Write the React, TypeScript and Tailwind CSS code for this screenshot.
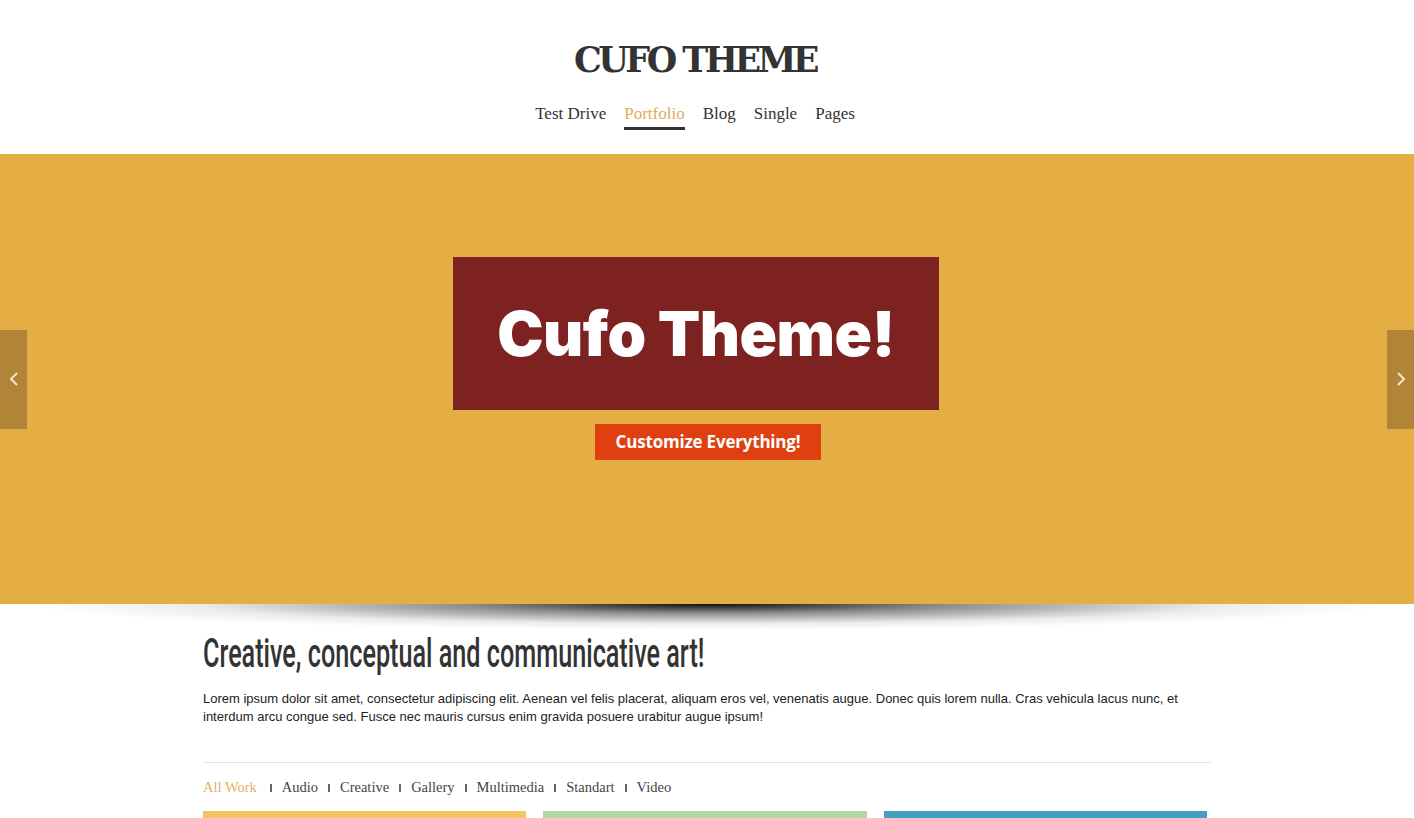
import React from 'react'

const navItems = ['Test Drive', 'Portfolio', 'Blog', 'Single', 'Pages']
const filters = ['All Work', 'Audio', 'Creative', 'Gallery', 'Multimedia', 'Standart', 'Video']

function Header() {
    return (
        <header className="flex flex-col items-center bg-white pt-[38px] pr-[24px]">
            <h1 className="font-['DejaVu_Serif',serif] text-[35px] font-bold leading-[44px] tracking-[-3.5px] text-[#333]">
                CUFO THEME
            </h1>
            <nav className="mt-[22px] flex items-start gap-[18px] font-['Liberation_Serif',serif] text-[17px] leading-[20px] text-[#333]">
                {navItems.map((item) => (
                    <a
                        key={item}
                        href="#"
                        className={
                            item === 'Portfolio'
                                ? 'border-b-[3px] border-[#333] pb-[3px] text-[#dcae5c]'
                                : 'pb-[3px]'
                        }
                    >
                        {item}
                    </a>
                ))}
            </nav>
        </header>
    )
}

function Slider() {
    return (
        <section className="mt-[24px] flex h-[450px] items-center justify-between bg-[#e4ae44]">
            <button className="flex h-[99px] w-[27px] items-center justify-center bg-[#b08538] text-[#f5e6c8]">
                <svg width="12" height="18" viewBox="0 0 12 18" fill="none">
                    <path d="M9 3L3 9l6 6" stroke="currentColor" strokeWidth="2" />
                </svg>
            </button>
            <div className="mr-[22px] flex flex-col items-center pb-[42px]">
                <div className="flex h-[153px] w-[486px] items-center justify-center bg-[#7e2121]">
                    <h2 className="font-['Inter',sans-serif] text-[62px] font-black tracking-[-0.5px] text-white">
                        Cufo Theme!
                    </h2>
                </div>
                <a
                    href="#"
                    className="ml-[24px] mt-[14px] flex h-[36px] w-[226px] items-center justify-center bg-[#e0400f] font-['Open_Sans',sans-serif] text-[17px] font-bold tracking-[-0.2px] text-white"
                >
                    Customize Everything!
                </a>
            </div>
            <button className="flex h-[99px] w-[27px] items-center justify-center bg-[#b08538] text-[#f5e6c8]">
                <svg width="12" height="18" viewBox="0 0 12 18" fill="none">
                    <path d="M3 3l6 6-6 6" stroke="currentColor" strokeWidth="2" />
                </svg>
            </button>
        </section>
    )
}

function Content() {
    return (
        <main className="mx-auto w-[1008px]">
            <h3 className="mt-[2px] h-[44px] whitespace-nowrap font-['Roboto',sans-serif] text-[40px] font-medium leading-[44px] text-[#333]">
                <span className="inline-block origin-left scale-x-[0.63]">
                    Creative, conceptual and communicative art!
                </span>
            </h3>
            <p className="mt-[14px] font-['Liberation_Sans',sans-serif] text-[13px] leading-[18px] text-[#222]">
                Lorem ipsum dolor sit amet, consectetur adipiscing elit. Aenean vel felis placerat, aliquam eros vel,
                venenatis augue. Donec quis lorem nulla. Cras vehicula lacus nunc, et interdum arcu congue sed. Fusce nec
                mauris cursus enim gravida posuere urabitur augue ipsum!
            </p>
            <div className="mt-[36px] border-t border-[#e2e2e2] pt-[14px]">
                <ul className="flex items-center font-['Liberation_Serif',serif] text-[14.5px] text-[#444]">
                    {filters.map((f, i) => (
                        <li key={f} className="flex items-center">
                            {i > 0 && <span className="mx-[10px] h-[8px] w-[2px] bg-[#666]" />}
                            <span className={i === 0 ? 'mr-[3px] text-[#e2b064]' : ''}>{f}</span>
                        </li>
                    ))}
                </ul>
            </div>
            <div className="mt-[12px] grid grid-cols-3 gap-[17px] pr-[4px]">
                <div className="h-[40px] bg-[#f2c462]" />
                <div className="h-[40px] bg-[#b0d7a4]" />
                <div className="h-[40px] bg-[#44a0bc]" />
            </div>
        </main>
    )
}

export default function App() {
    return (
        <div className="min-h-screen overflow-hidden bg-white">
            <Header />
            <Slider />
            <div className="h-[26px] bg-[radial-gradient(ellipse_48%_100%_at_50%_0%,rgba(0,0,0,0.95)_0%,rgba(0,0,0,0.45)_35%,rgba(0,0,0,0.08)_75%,transparent_100%)]" />
            <Content />
        </div>
    )
}
